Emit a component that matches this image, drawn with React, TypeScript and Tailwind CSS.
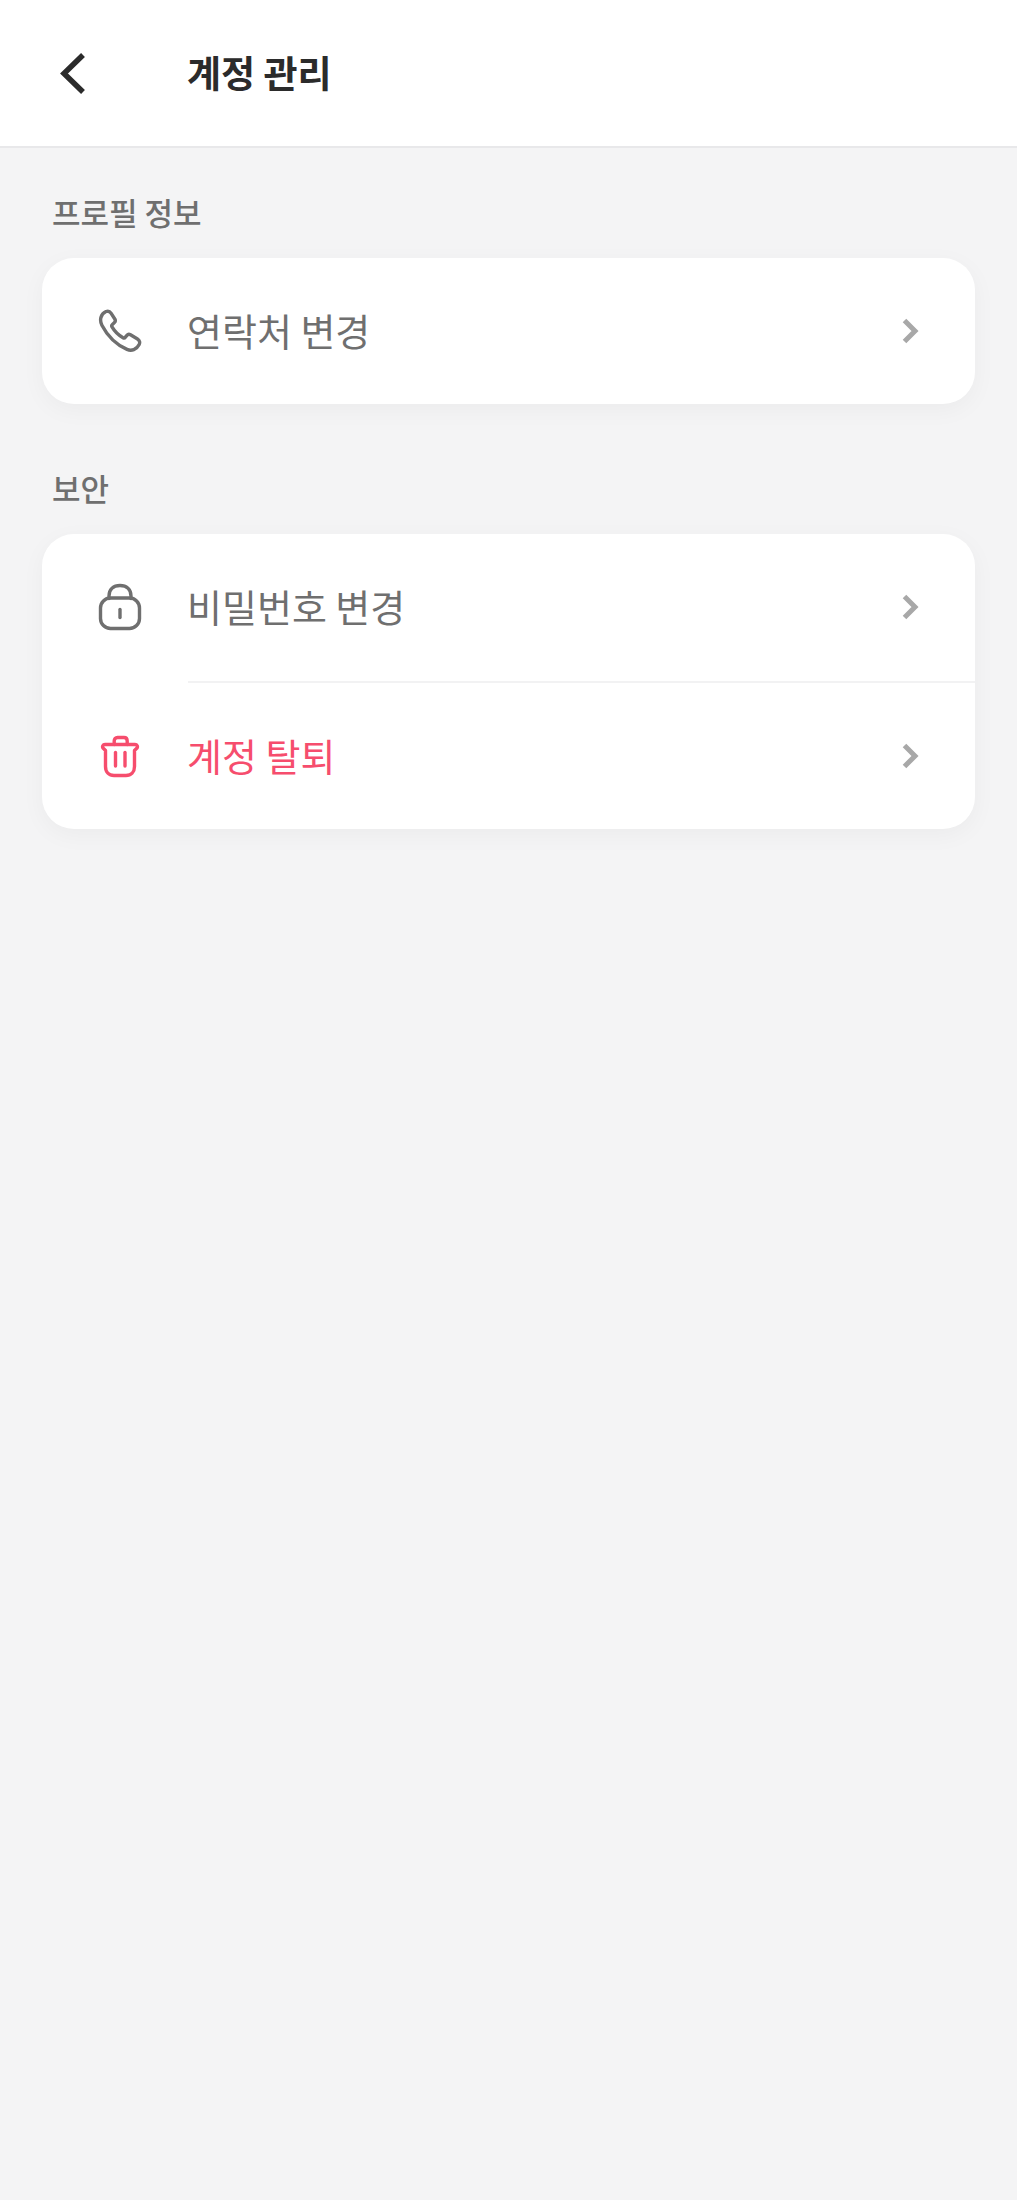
const font = { fontFamily: '"Noto Sans CJK KR", "Noto Sans", sans-serif' };

function Chevron() {
  return (
    <svg width="20" height="26" viewBox="0 0 20 26" fill="none" className="shrink-0">
      <path d="M3.5 2.5 L14 13 L3.5 23.5" stroke="#a8a8a8" strokeWidth="5" />
    </svg>
  );
}

function PhoneIcon() {
  return (
    <svg width="44" height="44" viewBox="0 0 44 44" fill="none" stroke="#6f6f6f" strokeWidth="3.4" strokeLinejoin="round">
      <path d="M8 2.5 C10 1.8 12 2.6 13 4.2 L16.8 10 C17.6 11.3 17.3 12.8 16.2 13.8 L14.4 15.4 C13.6 16.1 13.5 17 14 17.9 C16.5 22.2 20.6 26.2 25 28.7 C25.9 29.2 26.8 29 27.4 28.2 L28.9 26.4 C29.8 25.3 31.2 25.1 32.5 25.8 L39.5 30 C41.8 31.4 42.2 33.8 41 35.8 C38.6 40.6 33.6 42.4 29 40.4 C18.8 35.8 9.4 26.8 3.9 16.2 C1.4 11.4 2.4 5 8 2.5 Z" />
    </svg>
  );
}

function LockIcon() {
  return (
    <svg width="44" height="48" viewBox="0 0 44 48" fill="none" stroke="#6f6f6f" strokeWidth="3.4" strokeLinecap="round">
      <path d="M11 15.5 V13 C11 6.5 15.5 2.5 22 2.5 C28.5 2.5 33 6.5 33 13 V15.5" />
      <rect x="2.5" y="15" width="39" height="30.5" rx="10" />
      <path d="M22 26.5 V34.5" />
    </svg>
  );
}

function TrashIcon() {
  return (
    <svg width="40" height="44" viewBox="0 0 40 44" fill="none" stroke="#f64d6d" strokeWidth="3.4" strokeLinecap="round" strokeLinejoin="round">
      <path d="M14.2 10.5 V7 C14.2 5 15.5 3.5 17.5 3.5 H24 C26 3.5 27.2 5 27.2 7 V10.5" />
      <path d="M5 10.5 H35 C37.2 10.5 38 12.5 37 14 L34.5 16.5 V32.5 C34.5 38 31 41.5 26 41.5 H14 C9 41.5 5.5 38 5.5 32.5 V16.5 L3 14 C2 12.5 2.8 10.5 5 10.5 Z" />
      <path d="M15.5 18.5 V32" />
      <path d="M25 18.5 V32" />
    </svg>
  );
}

function Row({ icon, label, danger }: { icon: React.ReactNode; label: string; danger?: boolean }) {
  return (
    <div className="flex h-[146px] items-center pr-[54px]">
      <div className="flex w-[145px] shrink-0 justify-center pl-[11px]">{icon}</div>
      <span className={`flex-1 pb-[2px] text-[38px] leading-none ${danger ? "text-[#f64d6d]" : "text-[#6f6f6f]"}`}>{label}</span>
      <Chevron />
    </div>
  );
}

export default function App() {
  return (
    <div className="min-h-[2200px] bg-[#f4f4f5]" style={font}>
      <header className="flex h-[148px] items-center border-b-2 border-[#e8e8ea] bg-white">
        <div className="flex w-[187px] shrink-0 pl-[58px]">
          <svg width="30" height="44" viewBox="0 0 30 44" fill="none">
            <path d="M25 4 L6 22.5 L25 41" stroke="#2b2b2b" strokeWidth="5.5" />
          </svg>
        </div>
        <h1 className="pb-[2px] text-[37px] font-bold leading-none text-[#2b2b2b]">계정 관리</h1>
      </header>

      <main className="px-[42px]">
        <h2 className="flex h-[110px] items-center px-[10px] pt-[16px] text-[31px] font-medium leading-none text-[#6f6f6f]">프로필 정보</h2>
        <section className="overflow-hidden rounded-[32px] bg-white shadow-[0_6px_24px_rgba(0,0,0,0.04)]">
          <Row icon={<PhoneIcon />} label="연락처 변경" />
        </section>

        <h2 className="mt-[20px] flex h-[110px] items-center px-[10px] pt-[16px] text-[31px] font-medium leading-none text-[#6f6f6f]">보안</h2>
        <section className="overflow-hidden rounded-[32px] bg-white shadow-[0_6px_24px_rgba(0,0,0,0.04)]">
          <Row icon={<LockIcon />} label="비밀번호 변경" />
          <div className="ml-[146px] mt-[1px] h-[2px] bg-[#f2f2f3]" />
          <Row icon={<TrashIcon />} label="계정 탈퇴" danger />
        </section>
      </main>
    </div>
  );
}
